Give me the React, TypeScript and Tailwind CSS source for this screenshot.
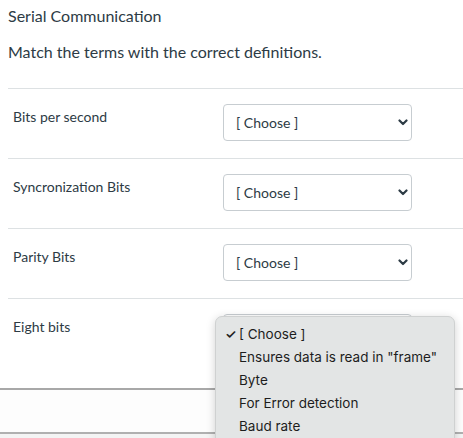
import React from "react";

const rows = [
  "Bits per second",
  "Syncronization Bits",
  "Parity Bits",
  "Eight bits",
];

const options = [
  "[ Choose ]",
  'Ensures data is read in "frame"',
  "Byte",
  "For Error detection",
  "Baud rate",
];

const Chevron = () => (
  <svg width="10" height="7" viewBox="0 0 10 7" className="text-[#2d3b45]">
    <path
      d="M1.5 1.5 L5 5 L8.5 1.5"
      fill="none"
      stroke="currentColor"
      strokeWidth="2.2"
      strokeLinecap="round"
      strokeLinejoin="round"
    />
  </svg>
);

const FakeSelect = () => (
  <div className="flex h-[37px] w-[189px] items-center justify-between rounded-[4px] border border-[#c7cdd1] bg-white pl-[12px] pr-[3px]">
    <span className="text-[14px] text-[#2d3b45]">[ Choose ]</span>
    <Chevron />
  </div>
);

export default function App() {
  return (
    <div
      className="relative h-[438px] w-[463px] overflow-hidden bg-white"
      style={{ fontFamily: "Lato, 'Liberation Sans', sans-serif" }}
    >
      <div className="pl-2">
        <p className="pt-[6px] text-[16px] leading-[20px] text-[#2d3b45]">
          Serial Communication
        </p>
        <p className="pt-[16px] text-[16px] leading-[20px] text-[#2d3b45]">
          Match the terms with the correct definitions.
        </p>
        <div className="mt-[26px]">
          {rows.map((label, i) => (
            <div
              key={label}
              className={
                i === rows.length - 1
                  ? "flex h-[90px] border-t border-[#dde1e3] pt-[15px]"
                  : "flex h-[70px] border-t border-[#dde1e3] pt-[15px]"
              }
            >
              <div className="w-[215px] pl-[5px] pt-[3px] text-[14px] leading-[20px] text-[#2d3b45]">
                {label}
              </div>
              <FakeSelect />
            </div>
          ))}
        </div>
      </div>
      <div className="h-[44px] border-t-2 border-[#a8a8a8] bg-[#fdfdfd]" />
      <div className="h-[10px] border-t-2 border-[#b0b0b0] bg-[#f4f4f4]" />

      <div
        className="absolute left-[215px] top-[316px] w-[240px] rounded-[7px] border border-[#cfd1d1] bg-[#e3e5e5] pt-[6px] shadow-[0_2px_10px_rgba(0,0,0,0.18)]"
        style={{ fontFamily: "Inter, 'Noto Sans', sans-serif" }}
      >
        {options.map((opt, i) => (
          <div
            key={opt}
            className="flex h-[23px] items-center text-[13.5px] text-[#1d1d1d]"
          >
            <span className="w-[23px] pl-[9px] text-[13px] font-semibold">
              {i === 0 ? "✓" : ""}
            </span>
            <span>{opt}</span>
          </div>
        ))}
        <div className="h-[6px]" />
      </div>
    </div>
  );
}
